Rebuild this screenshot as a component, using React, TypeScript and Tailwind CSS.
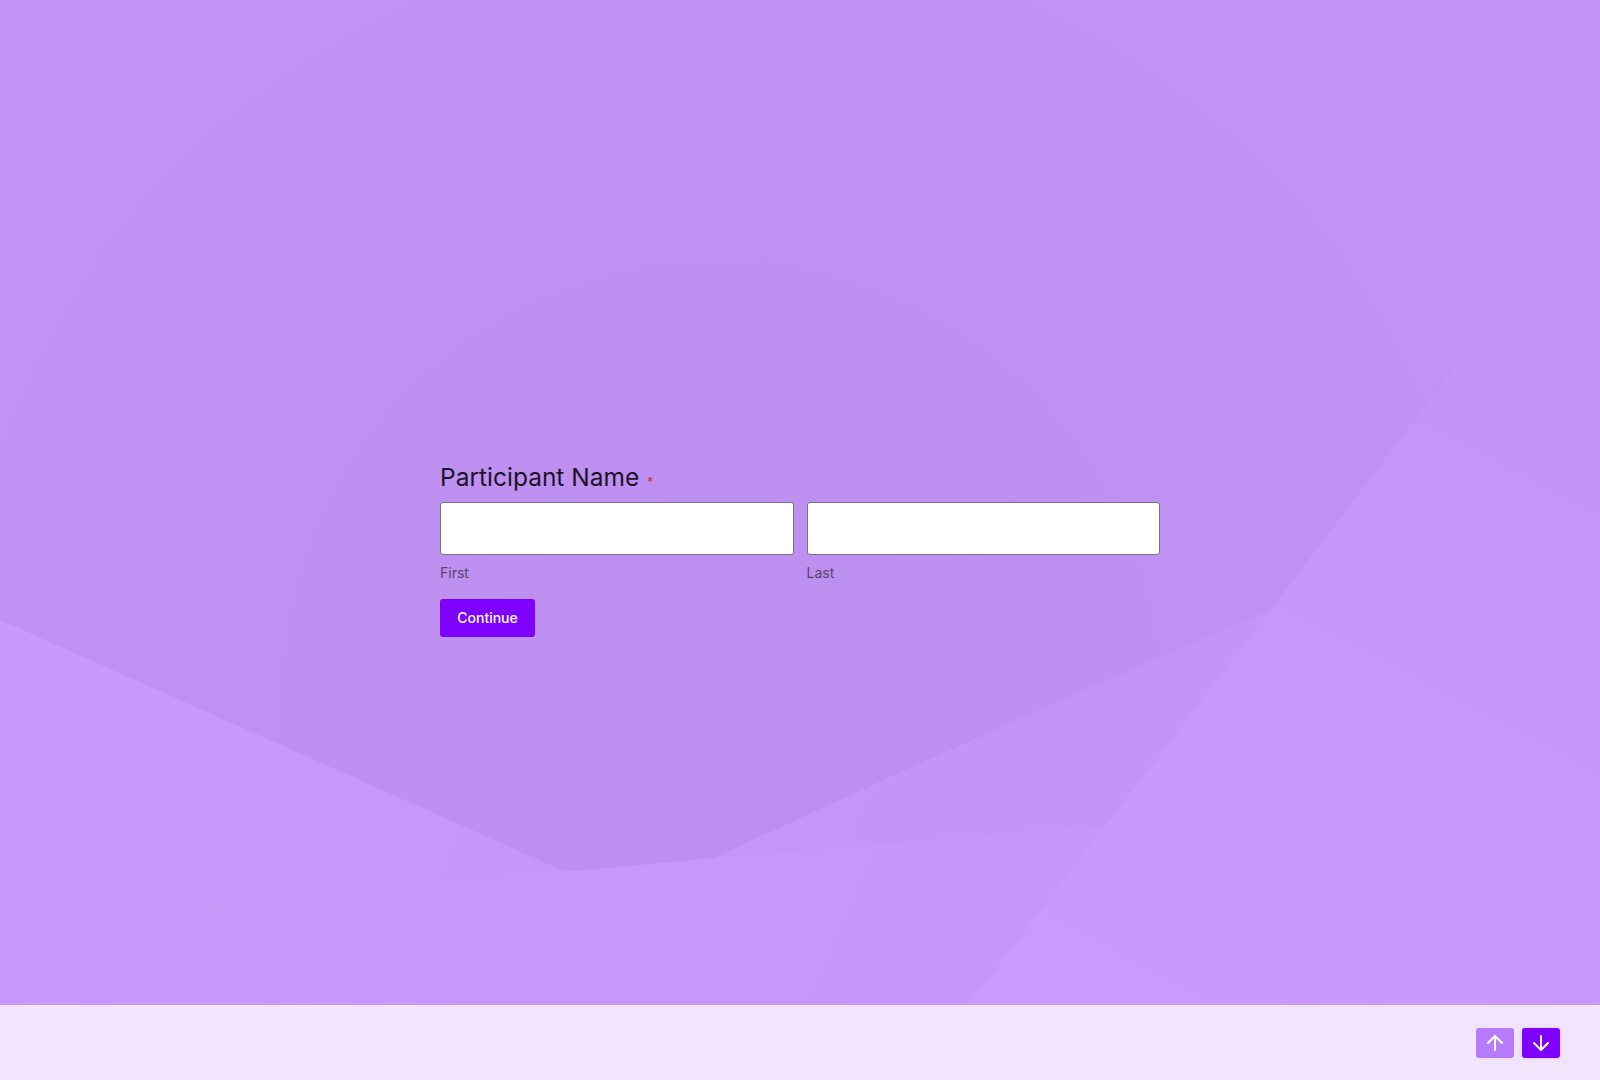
import { ArrowUp, ArrowDown } from "lucide-react";

function Backdrop() {
  return (
    <svg
      className="absolute inset-0 h-full w-full"
      viewBox="0 0 1600 1005"
      preserveAspectRatio="none"
      aria-hidden="true"
    >
      <defs>
        <radialGradient id="shade" cx="720" cy="700" r="860" gradientUnits="userSpaceOnUse">
          <stop offset="0" stopColor="#bb8eef" />
          <stop offset="1" stopColor="#c093f4" />
        </radialGradient>
        <linearGradient id="lowLeft" x1="0" y1="620" x2="900" y2="1005" gradientUnits="userSpaceOnUse">
          <stop offset="0" stopColor="#c99afd" />
          <stop offset="1" stopColor="#c295f7" />
        </linearGradient>
        <linearGradient id="rightSide" x1="1500" y1="250" x2="1100" y2="1005" gradientUnits="userSpaceOnUse">
          <stop offset="0" stopColor="#c194f5" />
          <stop offset="1" stopColor="#c99bfd" />
        </linearGradient>
      </defs>
      <rect width="1600" height="1005" fill="url(#shade)" />
      {/* lower left sweep */}
      <path
        d="M0 620 L566 872 L714 858 Q1000 725 1265 612 Q1440 540 1600 460 L1600 1005 L0 1005 Z"
        fill="url(#lowLeft)"
      />
      {/* band below the long seam */}
      <path d="M0 923 L714 858 L1040 830 L1600 790 L1600 1005 L0 1005 Z" fill="#c89afc" opacity="0.5" />
      {/* right panel */}
      <path d="M968 1005 Q1250 640 1566 219 L1600 200 L1600 1005 Z" fill="url(#rightSide)" />
    </svg>
  );
}

function NameField({ label }: { label: string }) {
  return (
    <div className="flex flex-col">
      <input
        type="text"
        aria-label={label}
        className="h-[53px] w-full rounded-[3px] border border-[#77727d] bg-white px-3 text-base text-[#1c1326] outline-none"
      />
      <label className="mt-2 text-[14px] leading-5 text-[#54476a]">{label}</label>
    </div>
  );
}

export default function App() {
  return (
    <div className="flex min-h-[1080px] w-full flex-col font-['Inter','Noto_Sans',sans-serif]">
      <main className="relative h-[1005px] w-full overflow-hidden">
        <Backdrop />
        <div className="relative mx-auto w-[720px] pt-[461px]">
          <h1 className="flex items-start text-[24.5px] leading-8 font-normal text-[#1c1326]">
            Participant Name
            <span className="ml-[8px] mt-[15px] text-[12px] leading-3 text-[#d9262b]">*</span>
          </h1>
          <div className="mt-[9px] grid grid-cols-2 gap-[13px]">
            <NameField label="First" />
            <NameField label="Last" />
          </div>
          <button
            type="button"
            className="mt-[16px] h-[38px] w-[95px] rounded-[3px] bg-[#7e00fe] pb-[2px] text-[14px] font-medium text-white"
          >
            Continue
          </button>
        </div>
      </main>

      {/* Footer navigation */}
      <footer className="flex h-[75px] items-start justify-end gap-2 bg-[#f1e4fc] pt-[23px] pr-10">
        <button
          type="button"
          aria-label="Previous"
          className="flex h-[30px] w-[38px] items-center justify-center rounded-[3px] bg-[#b57bfc] text-white"
        >
          <ArrowUp size={24} strokeWidth={2} />
        </button>
        <button
          type="button"
          aria-label="Next"
          className="flex h-[30px] w-[38px] items-center justify-center rounded-[3px] bg-[#7e00fe] text-white shadow-[0_0_4px_rgba(126,0,254,0.15)]"
        >
          <ArrowDown size={24} strokeWidth={2} />
        </button>
      </footer>
    </div>
  );
}
